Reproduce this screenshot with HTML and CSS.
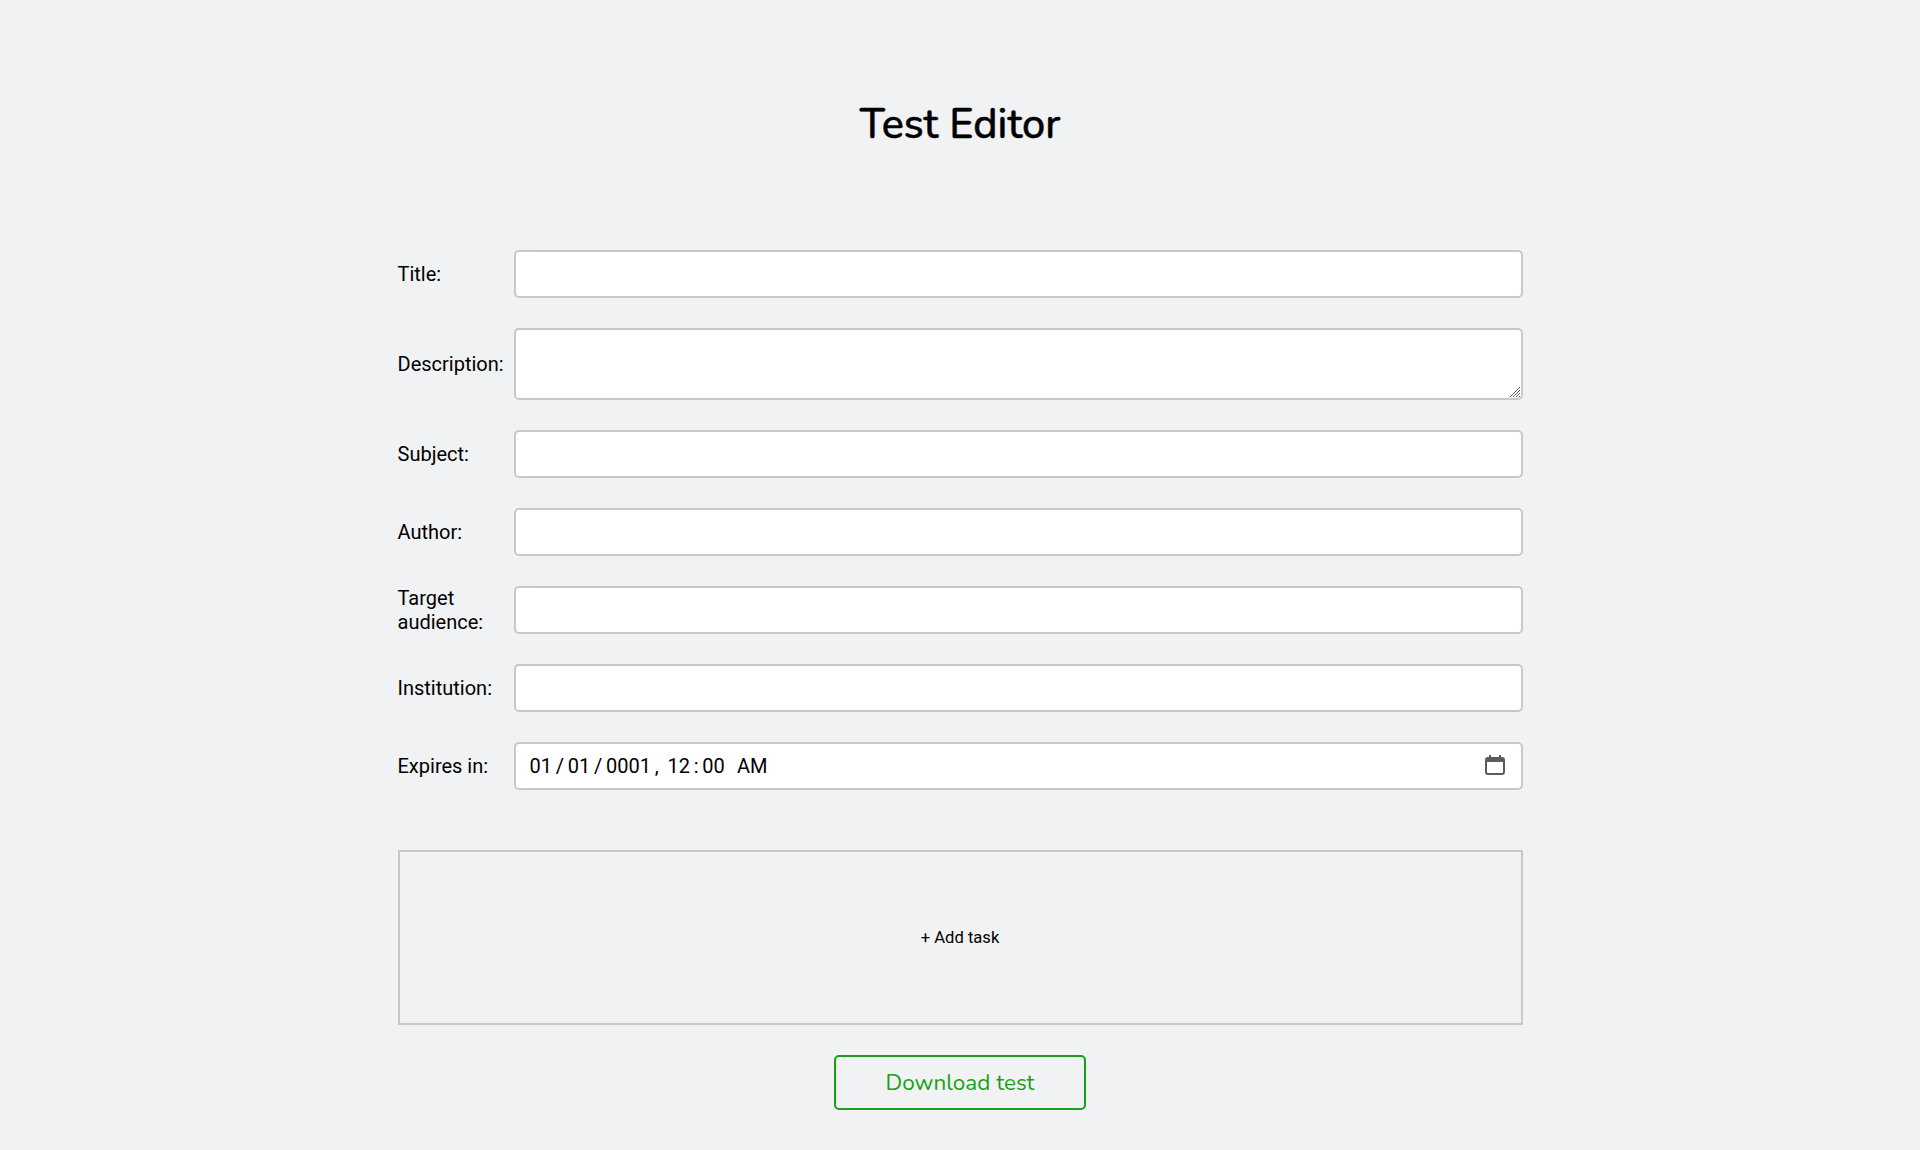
FILE: index.html
```html
<!DOCTYPE html>
<html lang="en">
<head>
<meta charset="utf-8">
<title>Test Editor</title>
<link rel="stylesheet" href="styles.css">
</head>
<body>
<main class="editor">
  <h1 class="heading">Test Editor</h1>
  <form class="form">
    <label class="label" for="title">Title:</label>
    <input class="field" id="title" type="text">
    <label class="label" for="description">Description:</label>
    <div class="control">
      <textarea class="field area" id="description"></textarea>
      <svg class="grip" viewBox="0 0 10 10" width="10" height="10"><path d="M0 10L10 0M3 10L10 3M6 10L10 6M9 10L10 9"/></svg>
    </div>
    <label class="label" for="subject">Subject:</label>
    <input class="field" id="subject" type="text">
    <label class="label" for="author">Author:</label>
    <input class="field" id="author" type="text">
    <label class="label" for="audience">Target audience:</label>
    <input class="field" id="audience" type="text">
    <label class="label" for="institution">Institution:</label>
    <input class="field" id="institution" type="text">
    <label class="label" for="expires">Expires in:</label>
    <div class="control">
      <input class="field date" id="expires" type="datetime-local" value="0001-01-01T00:00">
      <svg class="calendar" viewBox="0 0 20 20" width="20" height="20"><path fill-rule="evenodd" d="M4 0h2v2h8V0h2v2h1a3 3 0 0 1 3 3v12a3 3 0 0 1-3 3H3a3 3 0 0 1-3-3V5a3 3 0 0 1 3-3h1zM2 7v10a1 1 0 0 0 1 1h14a1 1 0 0 0 1-1V7z"/></svg>
    </div>
  </form>
  <button class="add-task" type="button">+ Add task</button>
  <button class="download" type="button">Download test</button>
</main>
</body>
</html>
```
FILE: styles.css
```css
* {
  box-sizing: border-box;
}

body {
  margin: 0;
  background: #f0f2f4;
  color: #000;
  font-family: Roboto, sans-serif;
  font-size: 20px;
}

.editor {
  width: 1125px;
  margin: 0 auto;
  padding-top: 97px;
  display: flex;
  flex-direction: column;
}

.heading {
  margin: 0 0 97px;
  height: 56px;
  line-height: 56px;
  text-align: center;
  font-family: Nunito, Lato, sans-serif;
  font-size: 41.4px;
  font-weight: 500;
  -webkit-text-stroke: 0.5px #000;
}

.form {
  display: grid;
  grid-template-columns: 106px 1009px;
  column-gap: 10px;
  row-gap: 30px;
  align-items: center;
}

.label {
  line-height: 24px;
}

.control {
  position: relative;
}

.field {
  display: block;
  width: 100%;
  height: 48px;
  margin: 0;
  padding: 10px 13px;
  border: 2px solid #c8c8c8;
  border-radius: 5px;
  background: #fff;
  color: #000;
  font-family: Roboto, sans-serif;
  font-size: 20px;
}

.area {
  height: 72px;
  resize: none;
}

.grip {
  position: absolute;
  right: 3px;
  bottom: 3px;
  fill: none;
  stroke: #666;
  stroke-width: 1;
}

.date {
  padding-left: 10.3px;
}

.date::-webkit-datetime-edit-month-field,
.date::-webkit-datetime-edit-day-field,
.date::-webkit-datetime-edit-year-field,
.date::-webkit-datetime-edit-hour-field,
.date::-webkit-datetime-edit-minute-field,
.date::-webkit-datetime-edit-ampm-field {
  padding: 1px 3.75px;
}

.date::-webkit-datetime-edit-ampm-field {
  padding-left: 6px;
}

.date::-webkit-calendar-picker-indicator {
  opacity: 0;
}

.calendar {
  position: absolute;
  top: 13px;
  right: 17.5px;
  fill: #5b5b5b;
  pointer-events: none;
}

.add-task {
  height: 175px;
  margin: 60px 0 30px;
  padding: 0;
  border: 2px solid #c8c8c8;
  background: transparent;
  color: #000;
  font-family: Roboto, sans-serif;
  font-size: 16.6px;
}

.download {
  align-self: center;
  width: 252px;
  height: 55px;
  padding: 0;
  border: 2px solid #1aa014;
  border-radius: 5px;
  background: transparent;
  color: #1aa014;
  font-family: Nunito, Lato, sans-serif;
  font-size: 22.5px;
}
```
